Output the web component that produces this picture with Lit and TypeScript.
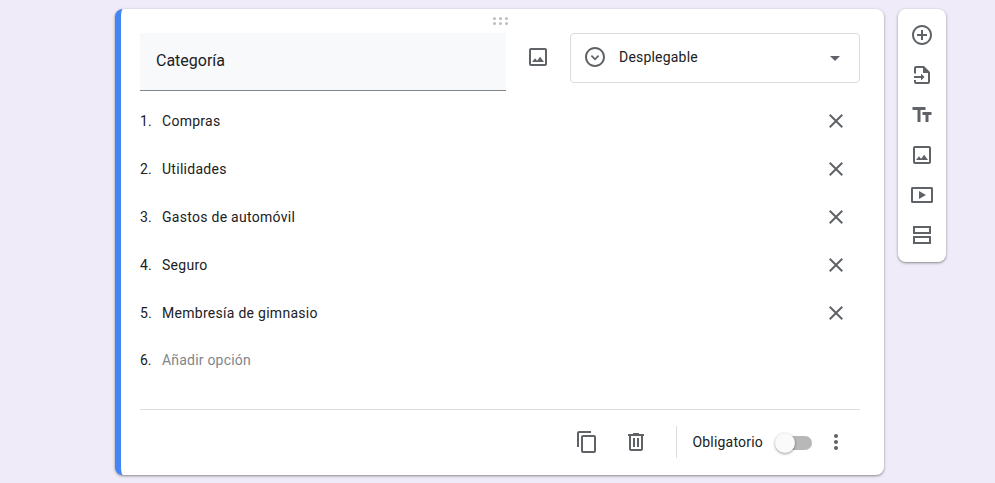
import { LitElement, html, css, svg } from "lit";
import { customElement } from "lit/decorators.js";

const icons = {
  add: svg`<path d="M13 7h-2v4H7v2h4v4h2v-4h4v-2h-4V7zm-1-5C6.48 2 2 6.48 2 12s4.48 10 10 10 10-4.48 10-10S17.52 2 12 2zm0 18c-4.41 0-8-3.59-8-8s3.59-8 8-8 8 3.59 8 8-3.59 8-8 8z"/>`,
  importForm: svg`<path d="M6 3h8l6 6v10a2 2 0 0 1-2 2H6a2 2 0 0 1-2-2v-2h2v2h12V10h-5V5H6v5.5H4V5a2 2 0 0 1 2-2z"/><path d="M4 13h7v-2.5l3.5 3.5-3.5 3.5V15H4z"/>`,
  title: svg`<path d="M2.5 4v3h5v12h3V7h5V4h-13zm19 5h-9v3h3v7h3v-7h3V9z"/>`,
  image: svg`<path d="M19 5v14H5V5h14m0-2H5c-1.1 0-2 .9-2 2v14c0 1.1.9 2 2 2h14c1.1 0 2-.9 2-2V5c0-1.1-.9-2-2-2zm-4.86 8.86l-3 3.87L9 13.14 6 17h12l-3.86-5.14z"/>`,
  video: svg`<path d="M21.5 4h-19C1.6 4 1 4.7 1 5.5v13c0 .8.6 1.5 1.5 1.5h19c.9 0 1.5-.7 1.5-1.5v-13c0-.8-.6-1.5-1.5-1.5zm-.5 14H3V6h18v12z"/><path d="M9 8v8l7-4z"/>`,
  section: svg`<path d="M3 3h18v8H3V3zm2 2v4h14V5H5zM3 13h18v8H3v-8zm2 2v4h14v-4H5z"/>`,
  close: svg`<path d="M19 6.41L17.59 5 12 10.59 6.41 5 5 6.41 10.59 12 5 17.59 6.41 19 12 13.41 17.59 19 19 17.59 13.41 12z"/>`,
  copy: svg`<path d="M16 1H4c-1.1 0-2 .9-2 2v14h2V3h12V1zm3 4H8c-1.1 0-2 .9-2 2v14c0 1.1.9 2 2 2h11c1.1 0 2-.9 2-2V7c0-1.1-.9-2-2-2zm0 16H8V7h11v14z"/>`,
  trash: svg`<path d="M15 4V3H9v1H4v2h1v13c0 1.1.9 2 2 2h10c1.1 0 2-.9 2-2V6h1V4h-5zm2 15H7V6h10v13zM9 8h2v9H9zm4 0h2v9h-2z"/>`,
  more: svg`<path d="M12 8c1.1 0 2-.9 2-2s-.9-2-2-2-2 .9-2 2 .9 2 2 2zm0 2c-1.1 0-2 .9-2 2s.9 2 2 2 2-.9 2-2-.9-2-2-2zm0 6c-1.1 0-2 .9-2 2s.9 2 2 2 2-.9 2-2-.9-2-2-2z"/>`,
  dropdown: svg`<path d="M12 2C6.48 2 2 6.48 2 12s4.48 10 10 10 10-4.48 10-10S17.52 2 12 2zm0 18c-4.41 0-8-3.59-8-8s3.59-8 8-8 8 3.59 8 8-3.59 8-8 8z"/><path d="M9 10l3 3 3-3 1.2 1.2-4.2 4.2-4.2-4.2z"/>`,
};

const icon = (body: unknown) => html`<svg class="icon" viewBox="0 0 24 24">${body}</svg>`;

@customElement("app-root")
export class AppRoot extends LitElement {
  static styles = css`
    :host {
      display: block;
      height: 483px;
      overflow: hidden;
      background: #f0ebf8;
      font-family: Roboto, "Liberation Sans", sans-serif;
      color: #202124;
    }
    .page {
      display: flex;
      align-items: flex-start;
      gap: 14px;
      padding: 9px 0 0 115px;
    }
    .icon {
      display: block;
      width: 24px;
      height: 24px;
      fill: #5f6368;
    }
    .card {
      position: relative;
      box-sizing: border-box;
      width: 769px;
      height: 466px;
      padding: 24px 24px 0 19px;
      background: #fff;
      border-left: 6px solid #4285f4;
      border-radius: 8px;
      box-shadow: 0 1px 2px rgba(60, 64, 67, 0.45), 0 1px 3px 1px rgba(60, 64, 67, 0.12);
    }
    .drag {
      position: absolute;
      left: 372px;
      top: 8px;
      display: grid;
      grid-template-columns: repeat(3, 3px);
      gap: 2px 3px;
    }
    .drag i {
      width: 3px;
      height: 3px;
      border-radius: 50%;
      background: #bdbdbd;
    }
    .head {
      display: flex;
      align-items: flex-start;
    }
    .title {
      box-sizing: border-box;
      width: 366px;
      height: 58px;
      padding: 0 16px 2px;
      display: flex;
      align-items: center;
      background: #f8f9fa;
      border-bottom: 1px solid #80868b;
      font-size: 16px;
    }
    .image-btn {
      width: 64px;
      height: 48px;
      display: flex;
      align-items: center;
      justify-content: center;
    }
    .select {
      box-sizing: border-box;
      width: 290px;
      height: 50px;
      padding: 0 19px 2px 12px;
      display: flex;
      align-items: center;
      border: 1px solid #dadce0;
      border-radius: 4px;
      font-size: 14px;
      letter-spacing: 0.2px;
    }
    .select span {
      flex: 1;
      margin-left: 12px;
    }
    .caret {
      width: 0;
      height: 0;
      border: 5px solid transparent;
      border-top-color: #5f6368;
      border-bottom: 0;
      margin-top: 3px;
    }
    .options {
      margin-top: 6px;
      padding-bottom: 26px;
      border-bottom: 1px solid #dadce0;
    }
    .row {
      height: 48px;
      display: flex;
      align-items: center;
      font-size: 14px;
      letter-spacing: 0.28px;
    }
    .num {
      width: 22px;
      font-size: 14px;
      letter-spacing: 0;
    }
    .label {
      flex: 1;
    }
    .row.add {
      height: 46px;
      letter-spacing: 0.2px;
    }
    .row.add .label {
      color: #80868b;
    }
    .remove {
      margin-right: 12px;
    }
    .foot {
      height: 64px;
      display: flex;
      align-items: center;
      justify-content: flex-end;
    }
    .foot-btn {
      width: 48px;
      display: flex;
      justify-content: center;
    }
    .foot-btn.copy {
      margin-right: 1px;
    }
    .sep {
      width: 1px;
      height: 32px;
      margin: 0 15px 0 16px;
      background: #dadce0;
    }
    .required {
      font-size: 14px;
      letter-spacing: 0.2px;
    }
    .switch {
      position: relative;
      width: 36px;
      height: 14px;
      margin: 2px 12px 0 13px;
      border-radius: 7px;
      background: #b8b8b8;
    }
    .switch::after {
      content: "";
      position: absolute;
      left: -1px;
      top: -3px;
      width: 20px;
      height: 20px;
      border-radius: 50%;
      background: #fafafa;
      box-shadow: 0 1px 3px rgba(0, 0, 0, 0.4);
    }
    .more {
      margin-right: 12px;
    }
    .side {
      box-sizing: border-box;
      width: 48px;
      height: 253px;
      padding: 6px 0;
      display: flex;
      flex-direction: column;
      align-items: center;
      background: #fff;
      border-radius: 8px;
      box-shadow: 0 1px 2px rgba(60, 64, 67, 0.45), 0 1px 3px 1px rgba(60, 64, 67, 0.12);
    }
    .side div {
      height: 40px;
      display: flex;
      align-items: center;
    }
  `;

  private options = ["Compras", "Utilidades", "Gastos de automóvil", "Seguro", "Membresía de gimnasio"];

  render() {
    return html`
      <div class="page">
        <div class="card">
          <div class="drag">${Array.from({ length: 6 }, () => html`<i></i>`)}</div>
          <div class="head">
            <div class="title">Categoría</div>
            <div class="image-btn">${icon(icons.image)}</div>
            <div class="select">
              ${icon(icons.dropdown)}
              <span>Desplegable</span>
              <div class="caret"></div>
            </div>
          </div>
          <div class="options">
            ${this.options.map(
              (o, i) => html`
                <div class="row">
                  <div class="num">${i + 1}.</div>
                  <div class="label">${o}</div>
                  <div class="remove">${icon(icons.close)}</div>
                </div>
              `
            )}
            <div class="row add">
              <div class="num">6.</div>
              <div class="label">Añadir opción</div>
            </div>
          </div>
          <div class="foot">
            <div class="foot-btn copy">${icon(icons.copy)}</div>
            <div class="foot-btn">${icon(icons.trash)}</div>
            <div class="sep"></div>
            <div class="required">Obligatorio</div>
            <div class="switch"></div>
            <div class="more">${icon(icons.more)}</div>
          </div>
        </div>
        <div class="side">
          <div>${icon(icons.add)}</div>
          <div>${icon(icons.importForm)}</div>
          <div>${icon(icons.title)}</div>
          <div>${icon(icons.image)}</div>
          <div>${icon(icons.video)}</div>
          <div>${icon(icons.section)}</div>
        </div>
      </div>
    `;
  }
}
